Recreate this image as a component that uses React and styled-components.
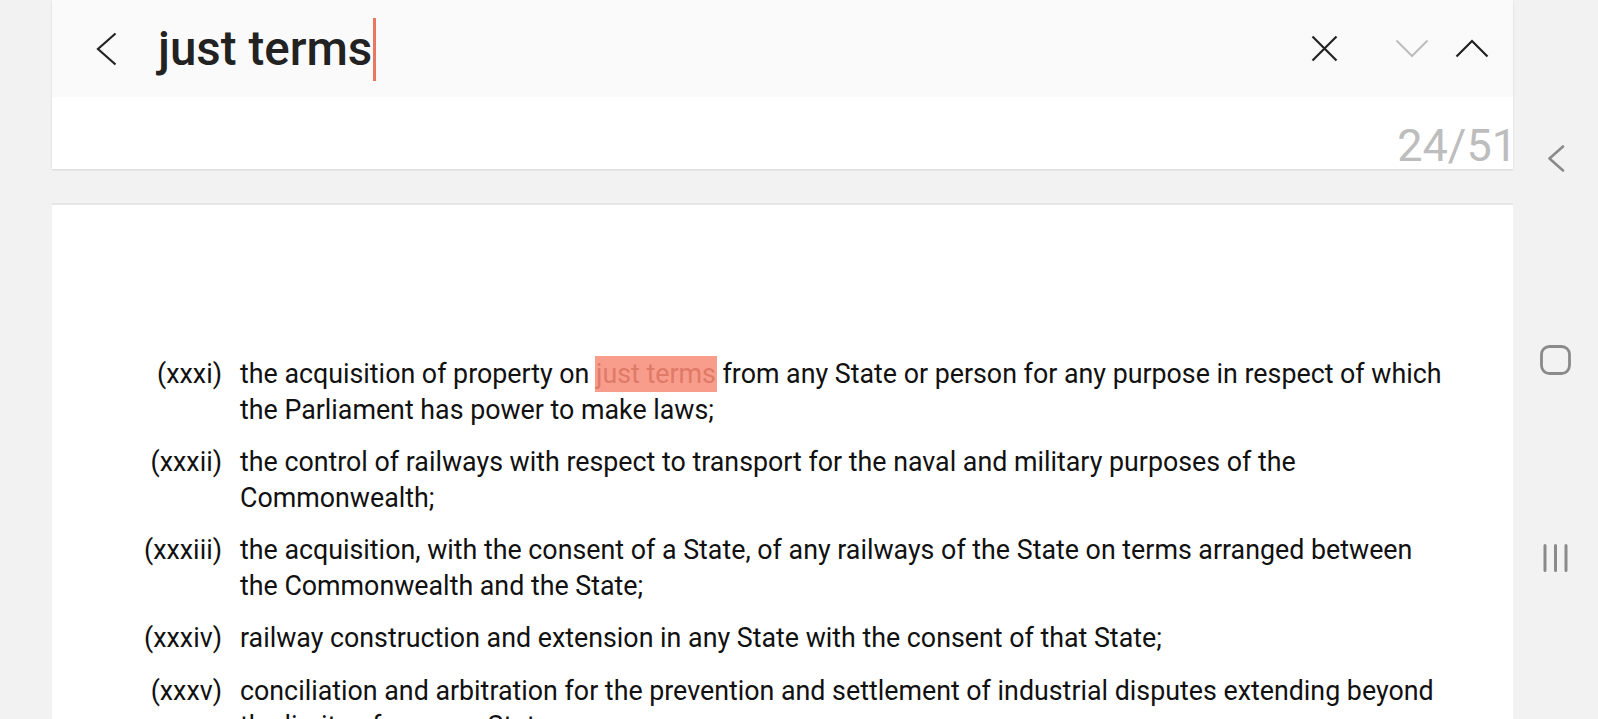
import styled, { createGlobalStyle } from "styled-components";

const GlobalStyle = createGlobalStyle`
  html, body {
    margin: 0;
    padding: 0;
    background: #f2f2f2;
    overflow: hidden;
  }
`;

const Screen = styled.div`
  display: flex;
  width: 1598px;
  height: 719px;
  background: #f2f2f2;
  overflow: hidden;
`;

const Main = styled.div`
  display: flex;
  flex-direction: column;
  width: 1461px;
  margin-left: 52px;
`;

const SearchPanel = styled.div`
  height: 169px;
  background: #fff;
  box-shadow: 0 1px 2px rgba(0, 0, 0, 0.12);
  display: flex;
  flex-direction: column;
`;

const SearchBar = styled.div`
  height: 97px;
  background: #fafafa;
  display: flex;
  align-items: center;
  padding: 0 24px 0 44px;
`;

const IconButton = styled.button`
  border: none;
  background: none;
  padding: 0;
  margin-right: ${(p) => p.$gap || 0}px;
  display: flex;
  align-items: center;
  justify-content: center;
  cursor: pointer;
`;

const Query = styled.div`
  flex: 1;
  display: flex;
  align-items: center;
  margin-left: 40px;
  font-family: Roboto, "Noto Sans", sans-serif;
  font-weight: 500;
  font-size: 47.5px;
  color: #222;
`;

const Caret = styled.span`
  display: inline-block;
  width: 3px;
  height: 63px;
  background: #e8775f;
  margin-left: 1px;
  margin-top: 2px;
`;

const Actions = styled.div`
  display: flex;
  align-items: center;
`;

const Counter = styled.div`
  flex: 1;
  display: flex;
  justify-content: flex-end;
  align-items: center;
  font-family: Roboto, "Noto Sans", sans-serif;
  font-size: 45px;
  color: #bdbdbd;
  overflow: hidden;
  padding-top: 24px;
`;

const CounterText = styled.span`
  margin-right: -4px;
`;

const DocPage = styled.div`
  flex: 1;
  margin-top: 34px;
  background: #fff;
  border-top: 2px solid #e6e6e6;
  padding: 152px 61px 0 0;
  overflow: hidden;
`;

const Clause = styled.div`
  display: grid;
  grid-template-columns: 170px 1fr;
  column-gap: 18px;
  margin-bottom: 17px;
  font-family: Roboto, "Liberation Sans", sans-serif;
  font-size: 26.8px;
  line-height: 35.5px;
  color: #111;
`;

const Label = styled.span`
  text-align: right;
`;

const Mark = styled.span`
  background: #f89d8b;
  color: #e07a68;
  padding: 2px 0;
  box-shadow: -1px 0 0 #f89d8b, 1px 0 0 #f89d8b;
`;

const NavBar = styled.div`
  width: 85px;
  display: flex;
  flex-direction: column;
  align-items: center;
  padding-top: 145px;
`;

const NavSlot = styled.div`
  height: ${(p) => p.$h}px;
  display: flex;
  justify-content: center;
`;

const clauses = [
  {
    n: "(xxxi)",
    parts: [
      "the acquisition of property on ",
      { hit: "just terms" },
      " from any State or person for any purpose in respect of which the Parliament has power to make laws;",
    ],
  },
  {
    n: "(xxxii)",
    parts: ["the control of railways with respect to transport for the naval and military purposes of the Commonwealth;"],
  },
  {
    n: "(xxxiii)",
    parts: ["the acquisition, with the consent of a State, of any railways of the State on terms arranged between the Commonwealth and the State;"],
  },
  {
    n: "(xxxiv)",
    parts: ["railway construction and extension in any State with the consent of that State;"],
  },
  {
    n: "(xxxv)",
    parts: ["conciliation and arbitration for the prevention and settlement of industrial disputes extending beyond the limits of any one State;"],
  },
];

export default function App() {
  return (
    <>
      <GlobalStyle />
      <Screen>
        <Main>
          <SearchPanel>
            <SearchBar>
              <IconButton aria-label="Back">
                <svg width="22" height="34" viewBox="0 0 22 34">
                  <polyline points="19.5,1.5 2,17 19.5,32.5" fill="none" stroke="#222" strokeWidth="2.2" />
                </svg>
              </IconButton>
              <Query>
                just terms
                <Caret />
              </Query>
              <Actions>
                <IconButton aria-label="Clear" $gap={57}>
                  <svg width="27" height="27" viewBox="0 0 27 27">
                    <path d="M1.5 1.5 L25.5 25.5 M25.5 1.5 L1.5 25.5" stroke="#222" strokeWidth="2.2" />
                  </svg>
                </IconButton>
                <IconButton aria-label="Next" $gap={26}>
                  <svg width="34" height="19" viewBox="0 0 34 19">
                    <polyline points="1.5,1.5 17,17 32.5,1.5" fill="none" stroke="#bdbdbd" strokeWidth="2" />
                  </svg>
                </IconButton>
                <IconButton aria-label="Previous">
                  <svg width="34" height="19" viewBox="0 0 34 19">
                    <polyline points="1.5,17.5 17,2 32.5,17.5" fill="none" stroke="#222" strokeWidth="2.2" />
                  </svg>
                </IconButton>
              </Actions>
            </SearchBar>
            <Counter>
              <CounterText>24/51</CounterText>
            </Counter>
          </SearchPanel>
          <DocPage>
            {clauses.map((c) => (
              <Clause key={c.n}>
                <Label>{c.n}</Label>
                <span>
                  {c.parts.map((p, i) =>
                    typeof p === "string" ? p : <Mark key={i}>{p.hit}</Mark>
                  )}
                </span>
              </Clause>
            ))}
          </DocPage>
        </Main>
        <NavBar>
          <NavSlot $h={200}>
            <svg width="18" height="27" viewBox="0 0 18 27">
              <polyline points="16,1.5 2.5,13.5 16,25.5" fill="none" stroke="#8a8a8a" strokeWidth="2.6" strokeLinecap="round" strokeLinejoin="round" />
            </svg>
          </NavSlot>
          <NavSlot $h={199}>
            <svg width="31" height="30" viewBox="0 0 31 30">
              <rect x="1.5" y="1.5" width="28" height="27" rx="8" fill="none" stroke="#8a8a8a" strokeWidth="2.8" />
            </svg>
          </NavSlot>
          <NavSlot $h={30}>
            <svg width="27" height="28" viewBox="0 0 27 28">
              <path d="M3 1.5 V26.5 M13.5 1.5 V26.5 M24 1.5 V26.5" stroke="#8a8a8a" strokeWidth="3" strokeLinecap="round" />
            </svg>
          </NavSlot>
        </NavBar>
      </Screen>
    </>
  );
}
